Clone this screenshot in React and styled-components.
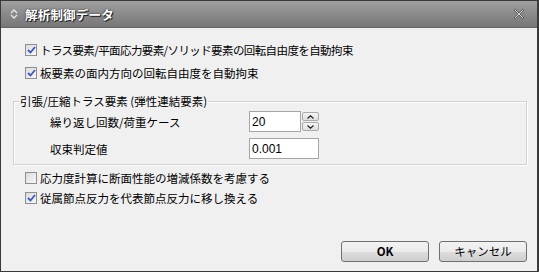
import React from "react";
import styled, { createGlobalStyle } from "styled-components";

const Global = createGlobalStyle`
  html, body { margin: 0; padding: 0; background: #f0f0f0; }
  body { font-family: "Noto Sans CJK JP", "Noto Sans", sans-serif; }
  * { box-sizing: border-box; }
`;

const Window = styled.div`
  width: 539px;
  height: 272px;
  display: flex;
  flex-direction: column;
  border: 1px solid #3a3a3a;
  border-right-width: 2px;
  background: #f0f0f0;
  font-family: "Noto Sans CJK JP", sans-serif;
  font-size: 11.5px;
  color: #000;
`;

const TitleBar = styled.div`
  height: 27px;
  flex: none;
  display: flex;
  align-items: center;
  padding: 0 9px 0 9px;
  gap: 7px;
  background: linear-gradient(#a0a0a0, #8a8a8a 50%, #777777);
  border-bottom: 1px solid #666;
`;

const Title = styled.div`
  flex: 1;
  color: #fff;
  font-weight: bold;
  font-size: 12.5px;
  letter-spacing: 0.2px;
  text-shadow: 1px 1px 0 #222, 0 0 2px #222;
`;

const CloseBtn = styled.div`
  width: 16px;
  height: 16px;
  display: flex;
  align-items: center;
  justify-content: center;
  margin-right: 1px;
`;

const Body = styled.div`
  flex: 1;
  display: flex;
  flex-direction: column;
  padding: 12px 10px 9px 24px;
`;

const CheckRow = styled.label`
  height: 20px;
  display: flex;
  align-items: center;
  gap: 3px;
  margin-top: ${(p) => p.$mt || 0}px;
  letter-spacing: ${(p) => p.$ls || 0}px;
`;

const Box = styled.span`
  width: 12px;
  height: 12px;
  flex: none;
  border: 1px solid #8e8f8f;
  background: linear-gradient(135deg, #dcdcdc, #f8f8f8);
  display: flex;
  align-items: center;
  justify-content: center;
`;

const Group = styled.fieldset`
  margin: 11px 0 0 -12px;
  width: 514px;
  border: 1px solid #d0d0d0;
  box-shadow: inset 1px 1px 0 #fff, 1px 1px 0 #fff;
  padding: 3px 0 5px 36px;
  display: grid;
  grid-template-columns: 199px auto;
  row-gap: 6px;
  align-items: center;
`;

const Legend = styled.legend`
  padding: 0 1px;
  margin-left: -31px;
  line-height: 14px;
`;

const FieldLabel = styled.span``;

const FieldWrap = styled.div`
  display: flex;
  align-items: center;
  gap: 1px;
`;

const Input = styled.div`
  width: ${(p) => p.$w}px;
  height: 21px;
  border: 1px solid #a5a5a5;
  background: #fff;
  display: flex;
  align-items: center;
  padding-left: 2px;
  font-family: "Liberation Sans", Arial, sans-serif;
  font-size: 12px;
`;

const Spin = styled.div`
  display: flex;
  flex-direction: column;
  gap: 1px;
`;

const SpinBtn = styled.div`
  width: 17px;
  height: 9px;
  border: 1px solid #aaa;
  border-radius: 2px;
  background: linear-gradient(#f6f6f6, #dedede);
  display: flex;
  align-items: center;
  justify-content: center;
`;

const Spacer = styled.div`
  flex: 1;
`;

const Buttons = styled.div`
  display: flex;
  justify-content: flex-end;
  gap: 10px;
`;

const Button = styled.button`
  width: 88px;
  height: 21px;
  border: 1px solid #707070;
  border-radius: 3px;
  background: linear-gradient(#f2f2f2 0%, #ebebeb 50%, #dddddd 51%, #cfcfcf 100%);
  font-family: "Noto Sans CJK JP", sans-serif;
  font-size: 11.5px;
  font-weight: ${(p) => (p.$bold ? "bold" : "normal")};
  color: #000;
  padding: 0;
  line-height: 19px;
`;

const Check = () => (
  <svg width="9" height="8" viewBox="0 0 9 8">
    <path d="M1 4 L3.5 6.5 L8 1" fill="none" stroke="#3d54c4" strokeWidth="1.8" />
  </svg>
);

const CheckBox = ({ checked, children, mt, ls }) => (
  <CheckRow $mt={mt} $ls={ls}>
    <Box>{checked && <Check />}</Box>
    <span>{children}</span>
  </CheckRow>
);

export default function App() {
  return (
    <>
      <Global />
      <Window>
        <TitleBar>
          <svg width="8" height="12" viewBox="0 0 8 12">
            <path d="M1 5 L4 2 L7 5" fill="none" stroke="#e8e8e8" strokeWidth="1.3" />
            <path d="M1 7 L4 10 L7 7" fill="none" stroke="#e8e8e8" strokeWidth="1.3" />
          </svg>
          <Title>解析制御データ</Title>
          <CloseBtn>
            <svg width="12" height="12" viewBox="0 0 12 12">
              <path d="M1.5 1.5 L10.5 10.5 M10.5 1.5 L1.5 10.5" stroke="#5a5a5a" strokeWidth="2" />
              <path d="M2 2 L10 10 M10 2 L2 10" stroke="#d8d8d8" strokeWidth="1" />
            </svg>
          </CloseBtn>
        </TitleBar>
        <Body>
          <CheckBox checked ls={-0.6}>トラス要素/平面応力要素/ソリッド要素の回転自由度を自動拘束</CheckBox>
          <CheckBox checked mt={3}>板要素の面内方向の回転自由度を自動拘束</CheckBox>
          <Group>
            <Legend>引張/圧縮トラス要素 (弾性連結要素)</Legend>
            <FieldLabel>繰り返し回数/荷重ケース</FieldLabel>
            <FieldWrap>
              <Input $w={52}>20</Input>
              <Spin>
                <SpinBtn>
                  <svg width="7" height="4" viewBox="0 0 7 4">
                    <path d="M0.5 3.5 L3.5 0.8 L6.5 3.5" fill="none" stroke="#222" strokeWidth="1.2" />
                  </svg>
                </SpinBtn>
                <SpinBtn>
                  <svg width="7" height="4" viewBox="0 0 7 4">
                    <path d="M0.5 0.5 L3.5 3.2 L6.5 0.5" fill="none" stroke="#222" strokeWidth="1.2" />
                  </svg>
                </SpinBtn>
              </Spin>
            </FieldWrap>
            <FieldLabel>収束判定値</FieldLabel>
            <FieldWrap>
              <Input $w={70}>0.001</Input>
            </FieldWrap>
          </Group>
          <CheckBox mt={3}>応力度計算に断面性能の増減係数を考慮する</CheckBox>
          <CheckBox checked>従属節点反力を代表節点反力に移し換える</CheckBox>
          <Spacer />
          <Buttons>
            <Button $bold>OK</Button>
            <Button>キャンセル</Button>
          </Buttons>
        </Body>
      </Window>
    </>
  );
}
